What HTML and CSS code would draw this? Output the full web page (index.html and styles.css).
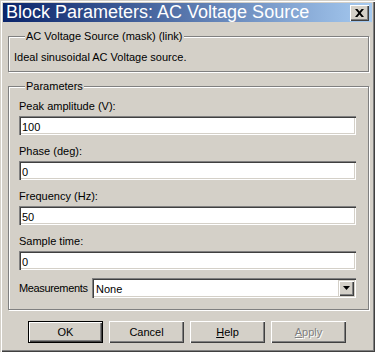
FILE: index.html
```html
<!DOCTYPE html>
<html lang="en">
<head>
    <meta charset="UTF-8">
    <meta name="viewport" content="width=device-width, initial-scale=1.0">
    <title>Block Parameters: AC Voltage Source</title>
    <link rel="stylesheet" href="styles.css">
</head>
<body>

<div class="window">
    <div class="titlebar">
        <span class="title">Block Parameters: AC Voltage Source</span>
        <button class="close-btn" aria-label="Close">
            <svg width="9" height="8" viewBox="0 0 9 8">
                <path d="M0 0h2.4l2.1 2.5L6.6 0H9L5.7 4 9 8H6.6L4.5 5.5 2.4 8H0l3.3-4z" fill="#000"/>
            </svg>
        </button>
    </div>

    <div class="dialog-body">
        <fieldset class="group">
            <legend>AC Voltage Source (mask) (link)</legend>
            <p class="description">Ideal sinusoidal AC Voltage source.</p>
        </fieldset>

        <fieldset class="group params">
            <legend>Parameters</legend>

            <label class="param-label" for="amp">Peak amplitude (V):</label>
            <input class="param-input" id="amp" type="text" value="100">

            <label class="param-label" for="phase">Phase (deg):</label>
            <input class="param-input" id="phase" type="text" value="0">

            <label class="param-label" for="freq">Frequency (Hz):</label>
            <input class="param-input" id="freq" type="text" value="50">

            <label class="param-label" for="ts">Sample time:</label>
            <input class="param-input" id="ts" type="text" value="0">

            <div class="measure-row">
                <span class="measure-label">Measurements</span>
                <div class="select">
                    <span class="select-value">None</span>
                    <span class="select-arrow">
                        <svg width="7" height="4" viewBox="0 0 7 4"><path d="M0 0h7L3.5 4z" fill="#000"/></svg>
                    </span>
                </div>
            </div>
        </fieldset>

        <div class="buttons">
            <button class="btn default">OK</button>
            <button class="btn">Cancel</button>
            <button class="btn"><u>H</u>elp</button>
            <button class="btn disabled"><u>A</u>pply</button>
        </div>
    </div>
</div>

</body>
</html>
```

FILE: styles.css
```css
body {
    margin: 0;
    padding: 0;
    background-color: #d4d0c8;
    font-family: "Liberation Sans", Arial, sans-serif;
    font-size: 11px;
    color: #000;
}
.window {
    width: 375px;
    height: 352px;
    box-sizing: border-box;
    padding: 3px;
    background-color: #d4d0c8;
    box-shadow: inset 1px 1px 0 #d4d0c8, inset 2px 2px 0 #fff,
                inset -1px -1px 0 #404040, inset -2px -2px 0 #808080;
}
.titlebar {
    height: 19px;
    display: flex;
    align-items: center;
    justify-content: space-between;
    padding: 0 3px 0 3px;
    background: linear-gradient(to right, #0a246a, #a6caf0);
}
.title {
    color: #fff;
    font-size: 18px;
    line-height: 19px;
    white-space: nowrap;
}
.close-btn {
    width: 19px;
    height: 16px;
    padding: 0;
    border: none;
    background-color: #d4d0c8;
    display: flex;
    align-items: center;
    justify-content: center;
    box-shadow: inset 1px 1px 0 #fff, inset -1px -1px 0 #404040, inset -2px -2px 0 #808080;
}
.dialog-body {
    padding: 0 3px 0 2px;
}
.group {
    margin: 8px 0 0 3px;
    padding: 8px 12px 7px 10px;
    border: 1px solid #808080;
    box-shadow: inset 1px 1px 0 #fff, 1px 1px 0 #fff;
    min-width: 0;
}
.group legend {
    padding: 0 1px;
    margin-left: 6px;
    line-height: 13px;
    background-color: #d4d0c8;
}
.description {
    margin: 0 0 0 -5px;
    line-height: 13px;
}
.params {
    margin-top: 8px;
    padding-top: 4px;
    padding-bottom: 11px;
}
.param-label {
    display: block;
    line-height: 13px;
    padding-top: 3px;
    margin-bottom: 3px;
}
.param-input {
    display: block;
    width: 100%;
    height: 19px;
    box-sizing: border-box;
    margin: 0 0 7px 0;
    padding: 2px 2px 0 3px;
    border: none;
    background-color: #fff;
    font-family: inherit;
    font-size: 11px;
    color: #000;
    box-shadow: inset 1px 1px 0 #808080, inset 2px 2px 0 #404040,
                inset -1px -1px 0 #fff, inset -2px -2px 0 #d4d0c8;
}
.measure-row {
    display: flex;
    align-items: center;
    gap: 4px;
    margin-top: 8px;
}
.measure-label {
    width: 69px;
    white-space: nowrap;
    letter-spacing: -0.35px;
}
.select {
    flex: 1;
    height: 20px;
    box-sizing: border-box;
    display: flex;
    align-items: center;
    justify-content: space-between;
    padding: 2px;
    background-color: #fff;
    box-shadow: inset 1px 1px 0 #808080, inset 2px 2px 0 #404040,
                inset -1px -1px 0 #fff, inset -2px -2px 0 #d4d0c8;
}
.select-value {
    padding-left: 2px;
    padding-top: 2px;
}
.select-arrow {
    width: 16px;
    height: 16px;
    display: flex;
    align-items: center;
    justify-content: center;
    background-color: #d4d0c8;
    box-shadow: inset 1px 1px 0 #d4d0c8, inset 2px 2px 0 #fff,
                inset -1px -1px 0 #404040, inset -2px -2px 0 #808080;
}
.buttons {
    display: flex;
    justify-content: center;
    gap: 6px;
    margin-top: 11px;
}
.btn {
    width: 75px;
    height: 22px;
    padding: 0;
    border: none;
    background-color: #d4d0c8;
    font-family: inherit;
    font-size: 11px;
    color: #000;
    box-shadow: inset 1px 1px 0 #fff, inset -1px -1px 0 #404040, inset -2px -2px 0 #808080;
}
.btn.default {
    box-shadow: inset 0 0 0 1px #000, inset 2px 2px 0 #fff,
                inset -2px -2px 0 #404040, inset -3px -3px 0 #808080;
}
.btn.disabled {
    color: #808080;
    text-shadow: 1px 1px 0 #fff;
}
```
